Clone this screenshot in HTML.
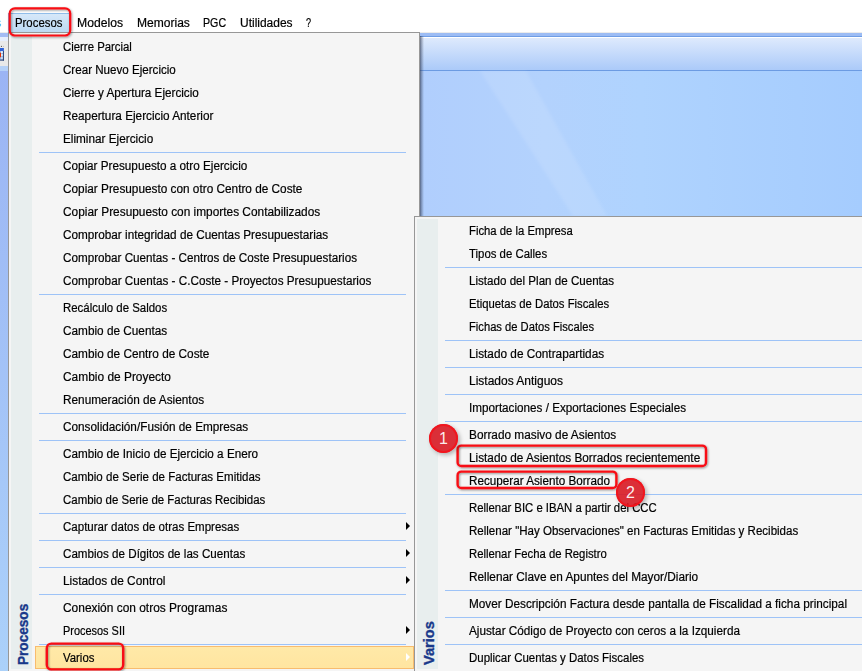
<!DOCTYPE html>
<html lang="es"><head><meta charset="utf-8"><title>Procesos - Varios</title>
<style>
html,body{margin:0;padding:0}
body{width:862px;height:671px;overflow:hidden;position:relative;background:#fff;font:12px "Liberation Sans",sans-serif;color:#000}
.abs{position:absolute}
#bg{position:absolute;left:0;top:0;width:862px;height:671px}
.tm{-webkit-text-stroke:0.2px #000;position:absolute;top:13.7px;height:19px;line-height:19px;white-space:nowrap;transform-origin:0 50%;display:inline-block}
#prochl{position:absolute;left:8px;top:13px;width:60px;height:18px;border:1px solid #90bde9;background:linear-gradient(#d6e8f9,#bcd9f3)}
.menu{position:absolute;background:#f5f5f5;border:1px solid #979797;box-sizing:border-box}
.gut{position:absolute;left:2px;top:2px;width:21px;background:#e8eeee}
.it{position:absolute;height:23px;line-height:23px;white-space:nowrap}
.it span{display:inline-block;transform-origin:0 50%;position:relative;top:0.5px;-webkit-text-stroke:0.2px #000}
.sep{position:absolute;height:1px;background:#9ec3f7;left:30px}
#m1 .sep{width:367px}
#m2 .sep{width:460px}
.arr{position:absolute;left:396.8px;width:0;height:0;border-left:4.8px solid #000;border-top:4.1px solid transparent;border-bottom:4.1px solid transparent}
.arr.w{border-left-color:#fff}
.hl{position:absolute;left:26px;width:379px;height:23px;box-sizing:border-box;border:1px solid #f8bc6e;background:linear-gradient(#ffe9a8,#ffe5a0)}
.vt{position:absolute;font-weight:bold;font-size:14.5px;color:#18388a;white-space:nowrap;transform-origin:0 0;line-height:14.5px;-webkit-text-stroke:0.35px #18388a}
.rb{position:absolute;box-sizing:border-box;border:2px solid #f0141c;border-radius:5px;box-shadow:1px 1px 3px rgba(0,0,0,.35), inset 1px 1px 3px rgba(0,0,0,.25)}
.circ{position:absolute;width:29px;height:29px;border-radius:50%;box-sizing:border-box;background:rgba(216,25,36,.9);color:rgba(255,255,255,.93);font-size:16px;line-height:29px;text-align:center;box-shadow:inset 0 0 0 2px rgba(242,20,28,.95),2px 2px 4px rgba(0,0,0,.28)}
</style></head><body>
<svg id="bg" width="862" height="671" viewBox="0 0 862 671">
<defs>
<linearGradient id="g1" x1="0" y1="0" x2="0" y2="1"><stop offset="0" stop-color="#deeafd"/><stop offset="1" stop-color="#abcaf9"/></linearGradient>
<linearGradient id="g2" gradientUnits="userSpaceOnUse" x1="420" y1="0" x2="862" y2="0"><stop offset="0" stop-color="#b0cefd"/><stop offset="0.28" stop-color="#b3d2fd"/><stop offset="0.5" stop-color="#afd3fe"/><stop offset="1" stop-color="#a5ccfe"/></linearGradient>
<linearGradient id="g3" x1="0" y1="0" x2="0" y2="1"><stop offset="0" stop-color="#9bb4f4"/><stop offset="1" stop-color="#abd1fa"/></linearGradient>
<filter id="bl" x="-10%" y="-10%" width="120%" height="120%"><feGaussianBlur stdDeviation="1.5"/></filter>
</defs>
<rect x="0" y="0" width="862" height="32" fill="#fff"/>
<rect x="0" y="32" width="862" height="1" fill="#ebebeb"/>
<rect x="0" y="33" width="862" height="3" fill="#9cbcf4"/>
<rect x="0" y="36" width="862" height="1" fill="#6f9de5"/>
<rect x="0" y="37" width="862" height="1" fill="#fff"/>
<rect x="0" y="38" width="862" height="32" fill="url(#g1)"/>
<rect x="0" y="70" width="862" height="1" fill="#6c9be2"/>
<rect x="0" y="71" width="862" height="600" fill="url(#g2)"/>
<polygon points="480,71 526,71 607,216 573,216" fill="#fff" fill-opacity="0.10" filter="url(#bl)"/>
<!-- left strip -->
<rect x="0" y="33" width="8" height="4" fill="#a3bcf4"/>
<rect x="0" y="37" width="8" height="5" fill="#e6eefd"/>
<rect x="0" y="41" width="8" height="25" fill="#e9e9e9"/>
<rect x="0" y="66" width="8" height="5" fill="#b5d1f8"/>
<rect x="0" y="71" width="8" height="600" fill="url(#g3)"/>
<!-- icon -->
<rect x="-2" y="51" width="5" height="8.8" fill="#9dbbe8"/>
<rect x="-2" y="48" width="5.9" height="3" fill="#2f62d8"/>
<rect x="1.2" y="51.2" width="1.7" height="1.8" fill="#fff"/>
<rect x="1.2" y="54" width="1.7" height="2" fill="#e8f0fb"/>
<rect x="1.2" y="57.2" width="1.7" height="1.8" fill="#d5e3f6"/>
<rect x="-2" y="52.7" width="3" height="4.5" fill="#e03000"/>
<rect x="2.9" y="51" width="1" height="9.6" fill="#1f3b73"/>
<rect x="-2" y="59.6" width="5.9" height="1" fill="#1f3b73"/>
<circle cx="1.4" cy="46.3" r="0.5" fill="#111"/><circle cx="3.3" cy="46.2" r="0.4" fill="#777"/><circle cx="1.5" cy="47.4" r="0.4" fill="#fff"/>
</svg>
<span class="abs" style="left:-4.9px;top:13.7px;line-height:19px;color:#2f8bee">s</span>
<div id="prochl"></div>
<span class="tm" style="left:15.2px;transform:scaleX(0.9474)">Procesos</span>
<span class="tm" style="left:76.5px;transform:scaleX(1.0141)">Modelos</span>
<span class="tm" style="left:136.6px;transform:scaleX(1.0040)">Memorias</span>
<span class="tm" style="left:203.2px;transform:scaleX(0.8879)">PGC</span>
<span class="tm" style="left:240.3px;transform:scaleX(0.9980)">Utilidades</span>
<span class="tm" style="left:306.2px;transform:scaleX(0.7626)">?</span>
<!-- shadow of menu 1 -->
<div class="abs" style="left:420px;top:36px;width:4px;height:635px;background:linear-gradient(90deg,rgba(45,55,80,.68),rgba(45,55,80,.32) 45%,rgba(45,55,80,0))"></div>
<div id="m1" class="menu" style="left:8px;top:32px;width:412px;height:641px">
<div class="gut" style="height:634px"></div>
<div class="it" style="top:2px;left:54.2px"><span style="transform:scaleX(0.9479)">Cierre Parcial</span></div>
<div class="it" style="top:25px;left:54.2px"><span style="transform:scaleX(0.9664)">Crear Nuevo Ejercicio</span></div>
<div class="it" style="top:48px;left:54.2px"><span style="transform:scaleX(0.9742)">Cierre y Apertura Ejercicio</span></div>
<div class="it" style="top:71px;left:54.2px"><span style="transform:scaleX(0.9804)">Reapertura Ejercicio Anterior</span></div>
<div class="it" style="top:94px;left:54.2px"><span style="transform:scaleX(0.9801)">Eliminar Ejercicio</span></div>
<div class="sep" style="top:119px"></div>
<div class="it" style="top:121px;left:54.2px"><span style="transform:scaleX(0.9763)">Copiar Presupuesto a otro Ejercicio</span></div>
<div class="it" style="top:144px;left:54.2px"><span style="transform:scaleX(0.9833)">Copiar Presupuesto con otro Centro de Coste</span></div>
<div class="it" style="top:167px;left:54.2px"><span style="transform:scaleX(0.9887)">Copiar Presupuesto con importes Contabilizados</span></div>
<div class="it" style="top:190px;left:54.2px"><span style="transform:scaleX(0.9792)">Comprobar integridad de Cuentas Presupuestarias</span></div>
<div class="it" style="top:213px;left:54.2px"><span style="transform:scaleX(0.9730)">Comprobar Cuentas - Centros de Coste Presupuestarios</span></div>
<div class="it" style="top:236px;left:54.2px"><span style="transform:scaleX(0.9752)">Comprobar Cuentas - C.Coste - Proyectos Presupuestarios</span></div>
<div class="sep" style="top:261px"></div>
<div class="it" style="top:263px;left:54.2px"><span style="transform:scaleX(0.9524)">Recálculo de Saldos</span></div>
<div class="it" style="top:286px;left:54.2px"><span style="transform:scaleX(0.9824)">Cambio de Cuentas</span></div>
<div class="it" style="top:309px;left:54.2px"><span style="transform:scaleX(0.9842)">Cambio de Centro de Coste</span></div>
<div class="it" style="top:332px;left:54.2px"><span style="transform:scaleX(0.9932)">Cambio de Proyecto</span></div>
<div class="it" style="top:355px;left:54.2px"><span style="transform:scaleX(0.9838)">Renumeración de Asientos</span></div>
<div class="sep" style="top:380px"></div>
<div class="it" style="top:382px;left:54.2px"><span style="transform:scaleX(0.9806)">Consolidación/Fusión de Empresas</span></div>
<div class="sep" style="top:407px"></div>
<div class="it" style="top:409px;left:54.2px"><span style="transform:scaleX(0.9750)">Cambio de Inicio de Ejercicio a Enero</span></div>
<div class="it" style="top:432px;left:54.2px"><span style="transform:scaleX(0.9618)">Cambio de Serie de Facturas Emitidas</span></div>
<div class="it" style="top:455px;left:54.2px"><span style="transform:scaleX(0.9538)">Cambio de Serie de Facturas Recibidas</span></div>
<div class="sep" style="top:480px"></div>
<div class="it" style="top:482px;left:54.2px"><span style="transform:scaleX(0.9612)">Capturar datos de otras Empresas</span></div>
<div class="arr" style="top:488.8px"></div>
<div class="sep" style="top:507px"></div>
<div class="it" style="top:509px;left:54.2px"><span style="transform:scaleX(0.9686)">Cambios de Dígitos de las Cuentas</span></div>
<div class="arr" style="top:515.8px"></div>
<div class="sep" style="top:534px"></div>
<div class="it" style="top:536px;left:54.2px"><span style="transform:scaleX(0.9903)">Listados de Control</span></div>
<div class="arr" style="top:542.8px"></div>
<div class="sep" style="top:561px"></div>
<div class="it" style="top:563px;left:54.2px"><span style="transform:scaleX(0.9938)">Conexión con otros Programas</span></div>
<div class="it" style="top:586px;left:54.2px"><span style="transform:scaleX(0.9113)">Procesos SII</span></div>
<div class="arr" style="top:592.8px"></div>
<div class="sep" style="top:611px"></div>
<div class="hl" style="top:613px"></div>
<div class="it" style="top:613px;left:54.2px"><span style="transform:scaleX(0.9479)">Varios</span></div>
<div class="arr w" style="top:619.8px"></div>
<div class="vt" id="vt1" style="left:7.3px;top:632px;transform:rotate(-90deg) scaleX(0.938)">Procesos</div>
</div>
<div id="m2" class="menu" style="left:414px;top:216px;width:470px;height:457px">
<div class="gut" style="height:450px"></div>
<div class="it" style="top:2px;left:53.80000000000001px"><span style="transform:scaleX(0.9422)">Ficha de la Empresa</span></div>
<div class="it" style="top:25px;left:53.80000000000001px"><span style="transform:scaleX(0.9494)">Tipos de Calles</span></div>
<div class="sep" style="top:50px"></div>
<div class="it" style="top:52px;left:53.80000000000001px"><span style="transform:scaleX(0.9666)">Listado del Plan de Cuentas</span></div>
<div class="it" style="top:75px;left:53.80000000000001px"><span style="transform:scaleX(0.9418)">Etiquetas de Datos Fiscales</span></div>
<div class="it" style="top:98px;left:53.80000000000001px"><span style="transform:scaleX(0.9324)">Fichas de Datos Fiscales</span></div>
<div class="sep" style="top:123px"></div>
<div class="it" style="top:125px;left:53.80000000000001px"><span style="transform:scaleX(0.9831)">Listado de Contrapartidas</span></div>
<div class="sep" style="top:150px"></div>
<div class="it" style="top:152px;left:53.80000000000001px"><span style="transform:scaleX(0.9992)">Listados Antiguos</span></div>
<div class="sep" style="top:177px"></div>
<div class="it" style="top:179px;left:53.80000000000001px"><span style="transform:scaleX(0.9740)">Importaciones / Exportaciones Especiales</span></div>
<div class="sep" style="top:204px"></div>
<div class="it" style="top:206px;left:53.80000000000001px"><span style="transform:scaleX(0.9851)">Borrado masivo de Asientos</span></div>
<div class="it" style="top:229px;left:53.80000000000001px"><span style="transform:scaleX(0.9818)">Listado de Asientos Borrados recientemente</span></div>
<div class="it" style="top:252px;left:53.80000000000001px"><span style="transform:scaleX(0.9741)">Recuperar Asiento Borrado</span></div>
<div class="sep" style="top:277px"></div>
<div class="it" style="top:279px;left:53.80000000000001px"><span style="transform:scaleX(0.9444)">Rellenar BIC e IBAN a partir del CCC</span></div>
<div class="it" style="top:302px;left:53.80000000000001px"><span style="transform:scaleX(0.9607)">Rellenar &quot;Hay Observaciones&quot; en Facturas Emitidas y Recibidas</span></div>
<div class="it" style="top:325px;left:53.80000000000001px"><span style="transform:scaleX(0.9433)">Rellenar Fecha de Registro</span></div>
<div class="it" style="top:348px;left:53.80000000000001px"><span style="transform:scaleX(0.9841)">Rellenar Clave en Apuntes del Mayor/Diario</span></div>
<div class="sep" style="top:373px"></div>
<div class="it" style="top:375px;left:53.80000000000001px"><span style="transform:scaleX(0.9805)">Mover Descripción Factura desde pantalla de Fiscalidad a ficha principal</span></div>
<div class="sep" style="top:400px"></div>
<div class="it" style="top:402px;left:53.80000000000001px"><span style="transform:scaleX(0.9789)">Ajustar Código de Proyecto con ceros a la Izquierda</span></div>
<div class="sep" style="top:427px"></div>
<div class="it" style="top:429px;left:53.80000000000001px"><span style="transform:scaleX(0.9547)">Duplicar Cuentas y Datos Fiscales</span></div>
<div class="vt" id="vt2" style="left:7.07px;top:447.7px;transform:rotate(-90deg) scaleX(1.009)">Varios</div>
</div>
<!-- annotations -->
<svg class="abs" style="left:0;top:0;overflow:visible" width="862" height="671" viewBox="0 0 862 671">
<defs><filter id="ds" x="-5%" y="-30%" width="110%" height="170%"><feDropShadow dx="0.8" dy="1" stdDeviation="1.1" flood-color="#000" flood-opacity="0.42"/></filter></defs>
<g fill="none" stroke="#f80e14" filter="url(#ds)">
<rect x="9.7" y="8.3" width="60.5" height="27.2" rx="5.2" stroke-width="2.2"/>
<rect x="46.8" y="643.6" width="76.4" height="25.8" rx="4.6" stroke-width="2.4"/>
<rect x="457.6" y="445.6" width="248.4" height="20.4" rx="3.8" stroke-width="2.4"/>
<rect x="457.6" y="471.6" width="158.8" height="16.4" rx="3.8" stroke-width="2.4"/>
</g></svg>
<div class="circ" style="left:429px;top:424px">1</div>
<div class="circ" style="left:616px;top:478px">2</div>
</body></html>
